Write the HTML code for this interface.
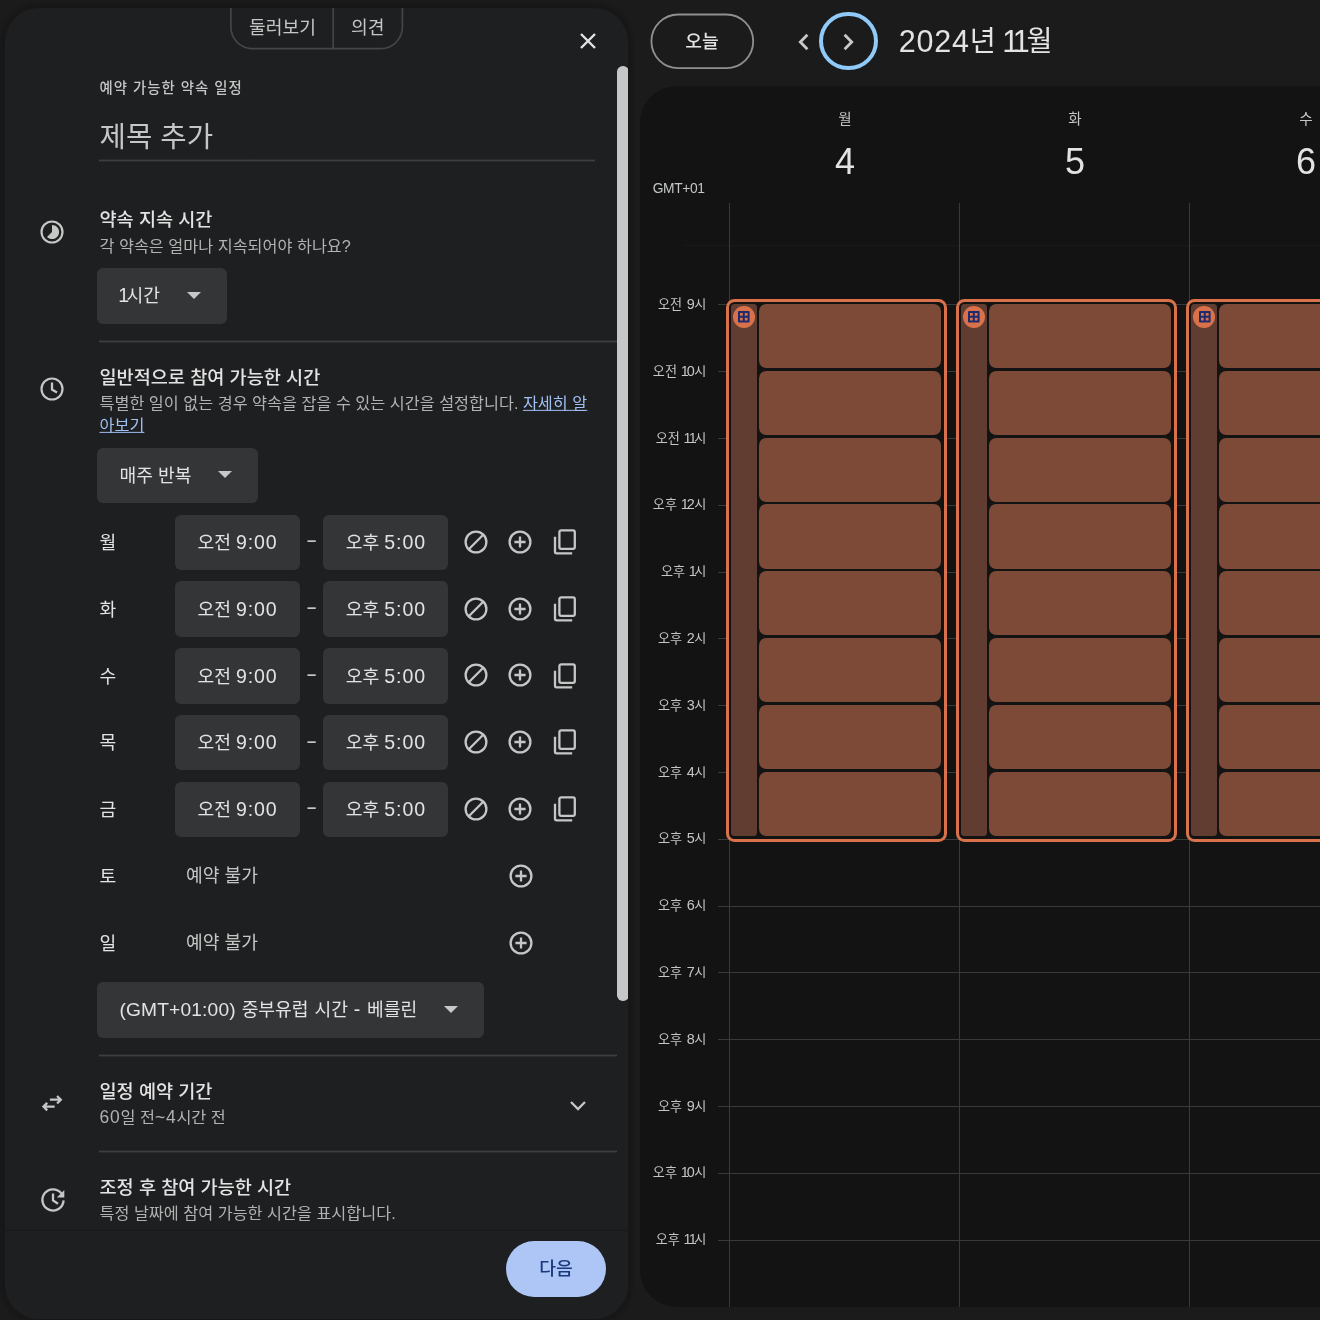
<!DOCTYPE html>
<html lang="ko">
<head>
<meta charset="utf-8">
<title>예약 가능한 약속 일정</title>
<style>
*{box-sizing:border-box;margin:0;padding:0}
html,body{width:1320px;height:1320px;overflow:hidden;background:#1b1b1b}
body{position:relative;font-family:"Liberation Sans","Noto Sans CJK KR",sans-serif;color:#e3e3e3;-webkit-font-smoothing:antialiased}
.abs{position:absolute}
.t{position:absolute;white-space:nowrap;line-height:1;transform:translateY(-50%)}
/* ---------- left panel ---------- */
#panel{position:absolute;left:5px;top:8px;width:623.2px;height:1311px;background:#1e1f20;border-radius:34px;box-shadow:0 0 3px 4.5px rgba(0,0,0,.13);overflow:hidden}
#panel .in{position:absolute;left:-5px;top:-8px;width:660px;height:1320px}
.hd{font-weight:500;font-size:18.6px;color:#e3e3e3}
.sub{font-size:16.25px;color:#b0b3b1}
.hr{position:absolute;height:3px;background:linear-gradient(rgba(68,71,70,.3) 0 33.3%,rgba(68,71,70,.8) 33.3% 66.6%,rgba(68,71,70,.3) 66.6% 100%)}
.dd{position:absolute;background:#333537;border-radius:6px}
.dd .t{font-size:18.2px;color:#e3e3e3;top:50%}
.n{font-size:1.075em;letter-spacing:.045em}
.m{font-size:30.5px;position:relative;top:1.1px}
.one{letter-spacing:-.14em;margin-left:-.06em}
.arrow{position:absolute;width:0;height:0;border-left:7px solid transparent;border-right:7px solid transparent;border-top:7.3px solid #c6c9c7;margin:-.6px 0 0 -.2px}
.day{font-size:18.2px;color:#e3e3e3}
.un{font-size:18.2px;color:#c4c7c5}
svg{position:absolute;overflow:visible}
/* ---------- calendar ---------- */
#cal{position:absolute;left:639.6px;top:85.5px;width:700px;height:1221.8px;background:#131314;border-radius:37px 0 0 37px;overflow:hidden}
.vl{position:absolute;width:1px;background:#37393b;top:203px;height:1104.3px}
.hl{position:absolute;height:1px;background:#37393b;left:717.5px;width:700px}
.tl{font-size:13.1px;color:#c4c7c5;word-spacing:1px}
.ln{font-size:1.1em;margin-right:-.6px}
.dn{font-size:14.6px;color:#c4c7c5}
.dd2{font-size:36px;color:#e3e3e3}
.ev{position:absolute;border:3px solid #d9724a;border-radius:8.5px;background:#131314}
.strip{position:absolute;background:#613d31;border-radius:3.5px}
.slot{position:absolute;background:#7c4a37;border-radius:7.2px}
.ic{position:absolute;width:22.4px;height:22.4px;border-radius:50%;background:#d9724a}
</style>
</head>
<body>
<div id="root" style="position:absolute;left:0;top:0;width:1320px;height:1320px;will-change:transform">

<!-- ================= LEFT PANEL ================= -->
<div id="panel"><div class="in">

  <!-- tabs pill -->
  <svg style="left:229px;top:0px" width="176" height="52" viewBox="0 0 176 52"><path d="M1.9 0 V27 A21.5 21.5 0 0 0 23.4 48.6 H152 A21.5 21.5 0 0 0 173.4 27 V0" fill="none" stroke="#444746" stroke-width="1.7"/><path d="M104.2 8 V48.6" fill="none" stroke="#444746" stroke-width="1.7"/></svg>
    <span class="t" style="left:249px;top:27.5px;font-size:18.2px;color:#c4c7c5">둘러보기</span>
  <span class="t" style="left:351px;top:27.5px;font-size:18.2px;color:#c4c7c5">의견</span>

  <!-- close -->
  <svg style="left:580px;top:33px" width="16" height="16" viewBox="0 0 16 16"><path d="M1 1 L15 15 M15 1 L1 15" stroke="#e3e3e3" stroke-width="2.4" fill="none"/></svg>

  <!-- scrollbar -->
  <div class="abs" style="left:617px;top:65.8px;width:11.5px;height:935.4px;border-radius:5.75px;background:#c7c7c7"></div>

  <span class="t" style="left:99.5px;top:88px;font-size:14.4px;letter-spacing:1px;color:#c4c7c5;font-weight:500">예약 가능한 약속 일정</span>
  <span class="t" style="left:99.5px;top:137px;font-size:28.7px;color:#c4c7c5">제목 추가</span>
  <div class="hr" style="left:99px;top:159px;width:496px"></div>

  <!-- duration -->
  <svg id="i-dur" style="left:40.3px;top:220px" width="24" height="24" viewBox="0 0 24 24"><circle cx="12" cy="12" r="10.5" fill="none" stroke="#c4c7c5" stroke-width="2.2"/><path d="M12 4.90 A7.1 7.1 0 1 1 6.98 17.02 L12 12 Z" fill="#c4c7c5"/></svg>
  <span class="t hd" style="left:99.5px;top:220.4px">약속 지속 시간</span>
  <span class="t sub" style="left:99.5px;top:246px">각 약속은 얼마나 지속되어야 하나요?</span>
  <div class="dd" style="left:97px;top:268.2px;width:130px;height:55.6px"><span class="t" style="left:22.5px"><span class="n"><span class="one">1</span></span>시간</span><i class="arrow" style="left:89.7px;top:24px"></i></div>
  <div class="hr" style="left:99px;top:340px;width:517.8px"></div>

  <!-- general availability -->
  <svg id="i-clock" style="left:40.3px;top:377.3px" width="24" height="24" viewBox="0 0 24 24"><circle cx="12" cy="12" r="10.5" fill="none" stroke="#c4c7c5" stroke-width="2.2"/><path d="M12 5.6 V12.6 L17 15.5" fill="none" stroke="#c4c7c5" stroke-width="2.3"/></svg>
  <span class="t hd" style="left:99.5px;top:378px">일반적으로 참여 가능한 시간</span>
  <span class="t sub" style="left:99.5px;top:403px">특별한 일이 없는 경우 약속을 잡을 수 있는 시간을 설정합니다. <a style="color:#a0bff3;text-decoration:underline">자세히 알</a></span>
  <span class="t sub" style="left:99.5px;top:425px"><a style="color:#a0bff3;text-decoration:underline">아보기</a></span>
  <div class="dd" style="left:97px;top:448px;width:161px;height:55px"><span class="t" style="left:22.5px">매주 반복</span><i class="arrow" style="left:120.7px;top:24px"></i></div>

    <!-- row 월 -->
  <span class="t day" style="left:99.5px;top:543.20px">월</span>
  <div class="dd" style="left:174.5px;top:514.50px;width:125.5px;height:55.5px"><span class="t" style="left:23px;margin-top:.8px">오전 <span class="n">9:00</span></span></div>
  <span class="t" style="left:307px;top:541.30px;font-size:16.6px;font-weight:700;color:#c4c7c5">–</span>
  <div class="dd" style="left:322.5px;top:514.50px;width:125.5px;height:55.5px"><span class="t" style="left:23.3px;margin-top:.8px">오후 <span class="n">5:00</span></span></div>
  <svg style="left:464px;top:529.80px" width="24" height="24" viewBox="0 0 24 24"><circle cx="12" cy="12" r="10.4" fill="none" stroke="#c4c7c5" stroke-width="2.3"/><path d="M19.2 4.8 L4.8 19.2" stroke="#c4c7c5" stroke-width="2.3"/></svg>
  <svg style="left:507.8px;top:529.80px" width="24" height="24" viewBox="0 0 24 24"><circle cx="12" cy="12" r="10.4" fill="none" stroke="#c4c7c5" stroke-width="2.3"/><path d="M12 6.4 V17.6 M6.4 12 H17.6" stroke="#c4c7c5" stroke-width="2.3"/></svg>
  <svg style="left:552px;top:529.00px" width="24" height="26" viewBox="0 0 24 26"><rect x="7.4" y="1.4" width="15.4" height="18.4" rx="1.8" fill="none" stroke="#c4c7c5" stroke-width="2.3"/><path d="M3 7.8 V22.8 Q3 24.4 4.6 24.4 H20.2" fill="none" stroke="#c4c7c5" stroke-width="2.3"/></svg>
  <!-- row 화 -->
  <span class="t day" style="left:99.5px;top:609.95px">화</span>
  <div class="dd" style="left:174.5px;top:581.25px;width:125.5px;height:55.5px"><span class="t" style="left:23px;margin-top:.8px">오전 <span class="n">9:00</span></span></div>
  <span class="t" style="left:307px;top:608.05px;font-size:16.6px;font-weight:700;color:#c4c7c5">–</span>
  <div class="dd" style="left:322.5px;top:581.25px;width:125.5px;height:55.5px"><span class="t" style="left:23.3px;margin-top:.8px">오후 <span class="n">5:00</span></span></div>
  <svg style="left:464px;top:596.55px" width="24" height="24" viewBox="0 0 24 24"><circle cx="12" cy="12" r="10.4" fill="none" stroke="#c4c7c5" stroke-width="2.3"/><path d="M19.2 4.8 L4.8 19.2" stroke="#c4c7c5" stroke-width="2.3"/></svg>
  <svg style="left:507.8px;top:596.55px" width="24" height="24" viewBox="0 0 24 24"><circle cx="12" cy="12" r="10.4" fill="none" stroke="#c4c7c5" stroke-width="2.3"/><path d="M12 6.4 V17.6 M6.4 12 H17.6" stroke="#c4c7c5" stroke-width="2.3"/></svg>
  <svg style="left:552px;top:595.75px" width="24" height="26" viewBox="0 0 24 26"><rect x="7.4" y="1.4" width="15.4" height="18.4" rx="1.8" fill="none" stroke="#c4c7c5" stroke-width="2.3"/><path d="M3 7.8 V22.8 Q3 24.4 4.6 24.4 H20.2" fill="none" stroke="#c4c7c5" stroke-width="2.3"/></svg>
  <!-- row 수 -->
  <span class="t day" style="left:99.5px;top:676.70px">수</span>
  <div class="dd" style="left:174.5px;top:648.00px;width:125.5px;height:55.5px"><span class="t" style="left:23px;margin-top:.8px">오전 <span class="n">9:00</span></span></div>
  <span class="t" style="left:307px;top:674.80px;font-size:16.6px;font-weight:700;color:#c4c7c5">–</span>
  <div class="dd" style="left:322.5px;top:648.00px;width:125.5px;height:55.5px"><span class="t" style="left:23.3px;margin-top:.8px">오후 <span class="n">5:00</span></span></div>
  <svg style="left:464px;top:663.30px" width="24" height="24" viewBox="0 0 24 24"><circle cx="12" cy="12" r="10.4" fill="none" stroke="#c4c7c5" stroke-width="2.3"/><path d="M19.2 4.8 L4.8 19.2" stroke="#c4c7c5" stroke-width="2.3"/></svg>
  <svg style="left:507.8px;top:663.30px" width="24" height="24" viewBox="0 0 24 24"><circle cx="12" cy="12" r="10.4" fill="none" stroke="#c4c7c5" stroke-width="2.3"/><path d="M12 6.4 V17.6 M6.4 12 H17.6" stroke="#c4c7c5" stroke-width="2.3"/></svg>
  <svg style="left:552px;top:662.50px" width="24" height="26" viewBox="0 0 24 26"><rect x="7.4" y="1.4" width="15.4" height="18.4" rx="1.8" fill="none" stroke="#c4c7c5" stroke-width="2.3"/><path d="M3 7.8 V22.8 Q3 24.4 4.6 24.4 H20.2" fill="none" stroke="#c4c7c5" stroke-width="2.3"/></svg>
  <!-- row 목 -->
  <span class="t day" style="left:99.5px;top:743.45px">목</span>
  <div class="dd" style="left:174.5px;top:714.75px;width:125.5px;height:55.5px"><span class="t" style="left:23px;margin-top:.8px">오전 <span class="n">9:00</span></span></div>
  <span class="t" style="left:307px;top:741.55px;font-size:16.6px;font-weight:700;color:#c4c7c5">–</span>
  <div class="dd" style="left:322.5px;top:714.75px;width:125.5px;height:55.5px"><span class="t" style="left:23.3px;margin-top:.8px">오후 <span class="n">5:00</span></span></div>
  <svg style="left:464px;top:730.05px" width="24" height="24" viewBox="0 0 24 24"><circle cx="12" cy="12" r="10.4" fill="none" stroke="#c4c7c5" stroke-width="2.3"/><path d="M19.2 4.8 L4.8 19.2" stroke="#c4c7c5" stroke-width="2.3"/></svg>
  <svg style="left:507.8px;top:730.05px" width="24" height="24" viewBox="0 0 24 24"><circle cx="12" cy="12" r="10.4" fill="none" stroke="#c4c7c5" stroke-width="2.3"/><path d="M12 6.4 V17.6 M6.4 12 H17.6" stroke="#c4c7c5" stroke-width="2.3"/></svg>
  <svg style="left:552px;top:729.25px" width="24" height="26" viewBox="0 0 24 26"><rect x="7.4" y="1.4" width="15.4" height="18.4" rx="1.8" fill="none" stroke="#c4c7c5" stroke-width="2.3"/><path d="M3 7.8 V22.8 Q3 24.4 4.6 24.4 H20.2" fill="none" stroke="#c4c7c5" stroke-width="2.3"/></svg>
  <!-- row 금 -->
  <span class="t day" style="left:99.5px;top:810.20px">금</span>
  <div class="dd" style="left:174.5px;top:781.50px;width:125.5px;height:55.5px"><span class="t" style="left:23px;margin-top:.8px">오전 <span class="n">9:00</span></span></div>
  <span class="t" style="left:307px;top:808.30px;font-size:16.6px;font-weight:700;color:#c4c7c5">–</span>
  <div class="dd" style="left:322.5px;top:781.50px;width:125.5px;height:55.5px"><span class="t" style="left:23.3px;margin-top:.8px">오후 <span class="n">5:00</span></span></div>
  <svg style="left:464px;top:796.80px" width="24" height="24" viewBox="0 0 24 24"><circle cx="12" cy="12" r="10.4" fill="none" stroke="#c4c7c5" stroke-width="2.3"/><path d="M19.2 4.8 L4.8 19.2" stroke="#c4c7c5" stroke-width="2.3"/></svg>
  <svg style="left:507.8px;top:796.80px" width="24" height="24" viewBox="0 0 24 24"><circle cx="12" cy="12" r="10.4" fill="none" stroke="#c4c7c5" stroke-width="2.3"/><path d="M12 6.4 V17.6 M6.4 12 H17.6" stroke="#c4c7c5" stroke-width="2.3"/></svg>
  <svg style="left:552px;top:796.00px" width="24" height="26" viewBox="0 0 24 26"><rect x="7.4" y="1.4" width="15.4" height="18.4" rx="1.8" fill="none" stroke="#c4c7c5" stroke-width="2.3"/><path d="M3 7.8 V22.8 Q3 24.4 4.6 24.4 H20.2" fill="none" stroke="#c4c7c5" stroke-width="2.3"/></svg>
  <!-- row 토 -->
  <span class="t day" style="left:99.5px;top:876.95px">토</span>
  <span class="t un" style="left:186px;top:875.95px">예약 불가</span>
  <svg style="left:509px;top:864.15px" width="24" height="24" viewBox="0 0 24 24"><circle cx="12" cy="12" r="10.4" fill="none" stroke="#c4c7c5" stroke-width="2.3"/><path d="M12 6.4 V17.6 M6.4 12 H17.6" stroke="#c4c7c5" stroke-width="2.3"/></svg>
  <!-- row 일 -->
  <span class="t day" style="left:99.5px;top:943.70px">일</span>
  <span class="t un" style="left:186px;top:942.70px">예약 불가</span>
  <svg style="left:509px;top:930.90px" width="24" height="24" viewBox="0 0 24 24"><circle cx="12" cy="12" r="10.4" fill="none" stroke="#c4c7c5" stroke-width="2.3"/><path d="M12 6.4 V17.6 M6.4 12 H17.6" stroke="#c4c7c5" stroke-width="2.3"/></svg>

  <!-- timezone -->
  <div class="dd" style="left:97px;top:982px;width:387px;height:55.5px"><span class="t" style="left:22.5px;word-spacing:.8px"><span style="font-size:19.2px;letter-spacing:.15px">(GMT+01:00)</span> 중부유럽 시간 <span class="n">-</span> 베를린</span><i class="arrow" style="left:347.2px;top:24.5px"></i></div>
  <div class="hr" style="left:99px;top:1054px;width:517.8px"></div>

  <!-- booking window -->
  <svg id="i-swap" style="left:40px;top:1090px" width="24" height="24" viewBox="0 0 24 24"><path d="M9.9 9.7 H20.2 M17.06 5.96 L20.8 9.7 L17.06 13.44 M14.7 16.6 H4.1 M7.22 12.86 L3.48 16.6 L7.22 20.34" fill="none" stroke="#c4c7c5" stroke-width="2.3"/></svg>
  <span class="t hd" style="left:99.5px;top:1091.8px">일정 예약 기간</span>
  <span class="t sub" style="left:99.5px;top:1117.8px"><span class="n">60</span>일 전<span class="n">~4</span>시간 전</span>
  <svg style="left:570px;top:1101px" width="16" height="10" viewBox="0 0 16 10"><path d="M1 1 L8 8 L15 1" fill="none" stroke="#c4c7c5" stroke-width="2.3"/></svg>
  <div class="hr" style="left:99px;top:1150px;width:517.8px"></div>

  <!-- adjusted availability -->
  <svg id="i-upd" style="left:40.7px;top:1187.7px" width="24" height="24" viewBox="0 0 24 24"><path d="M20.4 5.4 A10.6 10.6 0 1 0 22.6 12.4" fill="none" stroke="#c4c7c5" stroke-width="2.3"/><path d="M23.3 1.9 V9.4 H15.8 Z" fill="#c4c7c5"/><path d="M12 5.4 V12.4 L17 15.8" fill="none" stroke="#c4c7c5" stroke-width="2.3"/></svg>
  <span class="t hd" style="left:99.5px;top:1188.4px">조정 후 참여 가능한 시간</span>
  <span class="t sub" style="left:99.5px;top:1212.7px">특정 날짜에 참여 가능한 시간을 표시합니다.</span>

  <!-- footer -->
  <div class="abs" style="left:5px;top:1231px;width:624px;height:89px;background:#1e1f20;box-shadow:0 -1px 2.5px rgba(0,0,0,.22)"></div>
  <div class="abs" style="left:505.5px;top:1240.5px;width:100.5px;height:56px;border-radius:28px;background:#adc6f6"></div>
  <span class="t" style="left:539.3px;top:1269.2px;font-size:18.2px;font-weight:500;color:#1b3a7e">다음</span>
</div></div>

<!-- ================= TOP BAR ================= -->
<svg style="left:649px;top:12px" width="107" height="59" viewBox="0 0 107 59"><rect x="2.4" y="2.5" width="101.8" height="53.7" rx="26.85" fill="none" stroke="#8e918f" stroke-width="1.8"/></svg>
<span class="t" style="left:685.3px;top:42px;font-size:18.2px;font-weight:500;color:#e3e3e3">오늘</span>
<svg style="left:798px;top:32.5px" width="11" height="18" viewBox="0 0 11 18"><path d="M9.4 1.7 L2.3 9 L9.4 16.3" fill="none" stroke="#c8cac8" stroke-width="2.8"/></svg>
<div class="abs" style="left:819.1px;top:11.9px;width:58.6px;height:58.6px;border:4.1px solid #8fcaf8;border-radius:50%"></div>
<svg style="left:842.7px;top:32.5px" width="11" height="18" viewBox="0 0 11 18"><path d="M1.6 1.7 L8.7 9 L1.6 16.3" fill="none" stroke="#c8cac8" stroke-width="2.8"/></svg>
<span class="t" style="left:898.8px;top:40.3px;font-size:28.3px;color:#e3e3e3"><span class="m" style="letter-spacing:.8px">2024</span>년 <span class="m"><span class="one" style="letter-spacing:-.16em;margin-left:-.05em">1</span><span class="one" style="letter-spacing:-.11em;margin-left:-.05em">1</span></span>월</span>

<!-- ================= CALENDAR ================= -->
<div id="cal"></div>
<div class="hl" style="top:244.5px;left:685px;background:#18191a"></div>
<div class="hl" style="top:304px"></div>
<span class="t tl" style="right:613.8px;top:304.00px">오전 <span class="ln">9</span>시</span>
<div class="hl" style="top:371px"></div>
<span class="t tl" style="right:613.8px;top:370.80px">오전 <span class="ln"><span class="one">1</span>0</span>시</span>
<div class="hl" style="top:438px"></div>
<span class="t tl" style="right:613.8px;top:437.60px">오전 <span class="ln"><span class="one">1</span><span class="one">1</span></span>시</span>
<div class="hl" style="top:505px"></div>
<span class="t tl" style="right:613.8px;top:504.40px">오후 <span class="ln"><span class="one">1</span>2</span>시</span>
<div class="hl" style="top:572px"></div>
<span class="t tl" style="right:613.8px;top:571.20px">오후 <span class="ln"><span class="one">1</span></span>시</span>
<div class="hl" style="top:638px"></div>
<span class="t tl" style="right:613.8px;top:638.00px">오후 <span class="ln">2</span>시</span>
<div class="hl" style="top:705px"></div>
<span class="t tl" style="right:613.8px;top:704.80px">오후 <span class="ln">3</span>시</span>
<div class="hl" style="top:772px"></div>
<span class="t tl" style="right:613.8px;top:771.60px">오후 <span class="ln">4</span>시</span>
<div class="hl" style="top:839px"></div>
<span class="t tl" style="right:613.8px;top:838.40px">오후 <span class="ln">5</span>시</span>
<div class="hl" style="top:906px"></div>
<span class="t tl" style="right:613.8px;top:905.20px">오후 <span class="ln">6</span>시</span>
<div class="hl" style="top:972px"></div>
<span class="t tl" style="right:613.8px;top:972.00px">오후 <span class="ln">7</span>시</span>
<div class="hl" style="top:1039px"></div>
<span class="t tl" style="right:613.8px;top:1038.80px">오후 <span class="ln">8</span>시</span>
<div class="hl" style="top:1106px"></div>
<span class="t tl" style="right:613.8px;top:1105.60px">오후 <span class="ln">9</span>시</span>
<div class="hl" style="top:1173px"></div>
<span class="t tl" style="right:613.8px;top:1172.40px">오후 <span class="ln"><span class="one">1</span>0</span>시</span>
<div class="hl" style="top:1240px"></div>
<span class="t tl" style="right:613.8px;top:1239.20px">오후 <span class="ln"><span class="one">1</span><span class="one">1</span></span>시</span>
<div class="vl" style="left:729px"></div>
<div class="vl" style="left:959px"></div>
<div class="vl" style="left:1189px"></div>
<span class="t tl" style="left:652.7px;top:188.8px;font-size:13.8px;letter-spacing:-.35px">GMT+01</span>
<span class="t dn" style="left:845.0px;top:118.9px;transform:translate(-50%,-50%)">월</span>
<span class="t dd2" style="left:845.0px;top:161.9px;transform:translate(-50%,-50%)">4</span>
<div class="ev" style="left:725.6px;top:298.5px;width:221.4px;height:543.5px"><div class="strip" style="left:2.4px;top:2.25px;width:25.6px;height:532.50px"></div><div class="slot" style="left:30.15px;top:2.50px;width:182.5px;height:64.3px"></div><div class="slot" style="left:30.15px;top:69.30px;width:182.5px;height:64.3px"></div><div class="slot" style="left:30.15px;top:136.10px;width:182.5px;height:64.3px"></div><div class="slot" style="left:30.15px;top:202.90px;width:182.5px;height:64.3px"></div><div class="slot" style="left:30.15px;top:269.70px;width:182.5px;height:64.3px"></div><div class="slot" style="left:30.15px;top:336.50px;width:182.5px;height:64.3px"></div><div class="slot" style="left:30.15px;top:403.30px;width:182.5px;height:64.3px"></div><div class="slot" style="left:30.15px;top:470.10px;width:182.5px;height:64.3px"></div><div class="ic" style="left:4.2px;top:4.3px"><svg style="left:5.6px;top:5.6px" width="11.6" height="11.6" viewBox="0 0 11.6 11.6"><path d="M1 1 H10.6 V10.6 H1 Z M5.8 1 V10.6 M1 5.8 H10.6" fill="none" stroke="#1d2a6e" stroke-width="2" stroke-linejoin="round"/></svg></div></div>
<span class="t dn" style="left:1075.0px;top:118.9px;transform:translate(-50%,-50%)">화</span>
<span class="t dd2" style="left:1075.0px;top:161.9px;transform:translate(-50%,-50%)">5</span>
<div class="ev" style="left:955.6px;top:298.5px;width:221.4px;height:543.5px"><div class="strip" style="left:2.4px;top:2.25px;width:25.6px;height:532.50px"></div><div class="slot" style="left:30.15px;top:2.50px;width:182.5px;height:64.3px"></div><div class="slot" style="left:30.15px;top:69.30px;width:182.5px;height:64.3px"></div><div class="slot" style="left:30.15px;top:136.10px;width:182.5px;height:64.3px"></div><div class="slot" style="left:30.15px;top:202.90px;width:182.5px;height:64.3px"></div><div class="slot" style="left:30.15px;top:269.70px;width:182.5px;height:64.3px"></div><div class="slot" style="left:30.15px;top:336.50px;width:182.5px;height:64.3px"></div><div class="slot" style="left:30.15px;top:403.30px;width:182.5px;height:64.3px"></div><div class="slot" style="left:30.15px;top:470.10px;width:182.5px;height:64.3px"></div><div class="ic" style="left:4.2px;top:4.3px"><svg style="left:5.6px;top:5.6px" width="11.6" height="11.6" viewBox="0 0 11.6 11.6"><path d="M1 1 H10.6 V10.6 H1 Z M5.8 1 V10.6 M1 5.8 H10.6" fill="none" stroke="#1d2a6e" stroke-width="2" stroke-linejoin="round"/></svg></div></div>
<span class="t dn" style="left:1305.9px;top:118.9px;transform:translate(-50%,-50%)">수</span>
<span class="t dd2" style="left:1305.9px;top:161.9px;transform:translate(-50%,-50%)">6</span>
<div class="ev" style="left:1185.8px;top:298.5px;width:221.4px;height:543.5px"><div class="strip" style="left:2.4px;top:2.25px;width:25.6px;height:532.50px"></div><div class="slot" style="left:30.15px;top:2.50px;width:182.5px;height:64.3px"></div><div class="slot" style="left:30.15px;top:69.30px;width:182.5px;height:64.3px"></div><div class="slot" style="left:30.15px;top:136.10px;width:182.5px;height:64.3px"></div><div class="slot" style="left:30.15px;top:202.90px;width:182.5px;height:64.3px"></div><div class="slot" style="left:30.15px;top:269.70px;width:182.5px;height:64.3px"></div><div class="slot" style="left:30.15px;top:336.50px;width:182.5px;height:64.3px"></div><div class="slot" style="left:30.15px;top:403.30px;width:182.5px;height:64.3px"></div><div class="slot" style="left:30.15px;top:470.10px;width:182.5px;height:64.3px"></div><div class="ic" style="left:4.2px;top:4.3px"><svg style="left:5.6px;top:5.6px" width="11.6" height="11.6" viewBox="0 0 11.6 11.6"><path d="M1 1 H10.6 V10.6 H1 Z M5.8 1 V10.6 M1 5.8 H10.6" fill="none" stroke="#1d2a6e" stroke-width="2" stroke-linejoin="round"/></svg></div></div>

</div>
</body>
</html>
